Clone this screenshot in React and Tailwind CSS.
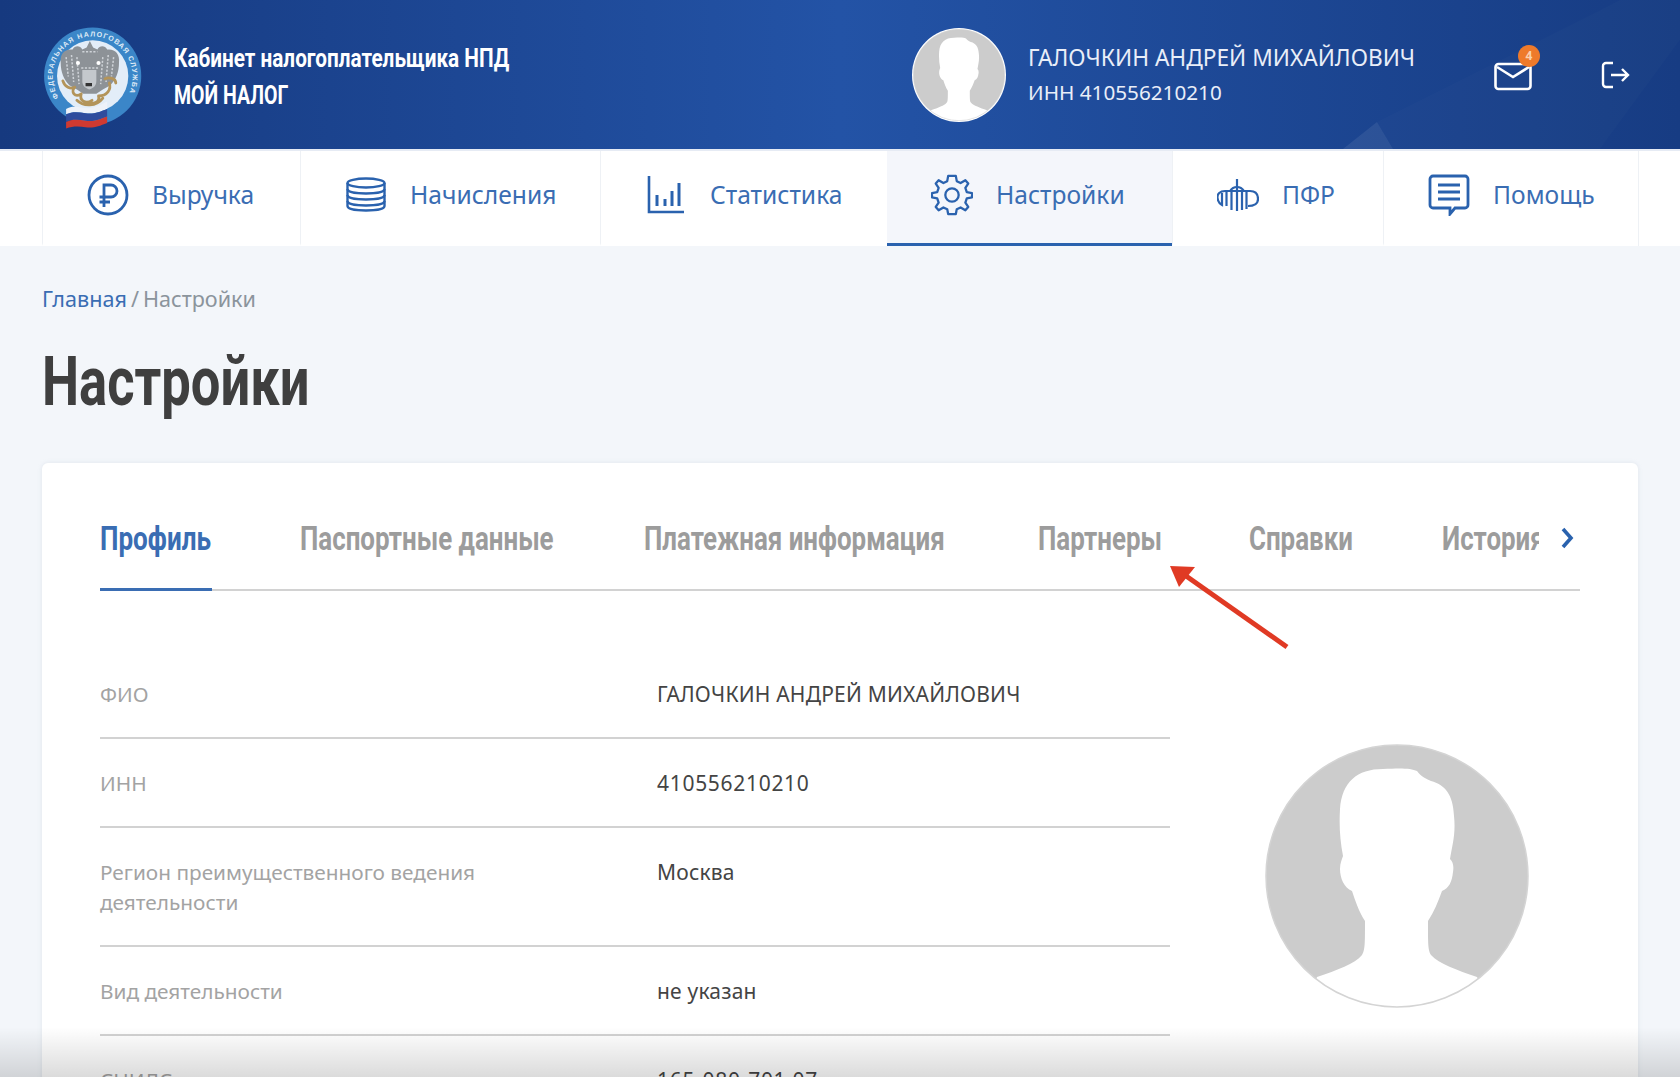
import React from "react";

const narrow = "font-['Roboto',sans-serif] font-bold";
const body = "font-['Noto_Sans',sans-serif]";

// the reference uses a condensed DIN-like face, Roboto squeezed gets near it
function Squeezed({ children, className = "" }) {
  return <span className={`inline-block origin-left whitespace-nowrap ${className}`}>{children}</span>;
}

function Silhouette({ className }) {
  return (
    <svg viewBox="0 0 264 264" className={className}>
      <defs>
        <clipPath id="avatarClip">
          <circle cx="132" cy="132" r="131" />
        </clipPath>
      </defs>
      <circle cx="132" cy="132" r="131" fill="#ccc" />
      <path
        clipPath="url(#avatarClip)"
        d="M52 233 C72 226 90 220 97 211 C100 206 100 200 100 177 C94 168 90 156 87 147 C79 144 75 134 75 125 C75 119 77 115 78 112 C75 96 74 82 75 65 C77 38 92 25 118 25 C135 24 146 24 152 27 C156 33 162 35 166 37 C180 41 188 50 189 72 C191 90 187 102 185 115 C188 118 189 122 188 128 C187 138 184 144 177 147 C173 158 169 168 163 177 C163 200 163 206 166 211 C174 220 192 226 212 233 L240 290 L30 290 Z"
        fill="#fff"
      />
      <circle cx="132" cy="132" r="131" fill="none" stroke="#d4d4d4" strokeWidth="1.5" />
    </svg>
  );
}

function Emblem() {
  return (
    <svg viewBox="0 0 104 112" className="w-[104px] h-[112px] shrink-0 mt-[15px]">
      <defs>
        <path id="emblemRing" d="M23.2 67.5 A37 37 0 1 1 86 67.5" />
      </defs>
      <g transform="translate(-8.3 -1.3) scale(1.08)">
        <circle cx="54.6" cy="47.5" r="45" fill="#3b86c8" />
        <circle cx="54.6" cy="47.5" r="33" fill="#e3edf8" />
        <text fill="#dfeaf6" className="font-['Liberation_Sans',sans-serif] font-bold" fontSize="6.6" letterSpacing="0.95">
          <textPath href="#emblemRing">ФЕДЕРАЛЬНАЯ НАЛОГОВАЯ СЛУЖБА</textPath>
        </text>
        {/* double headed eagle */}
        <path d="M52 15 L55 21 L59 23 C61 19 66 19 68 23 C75 22 80 27 79 35 C79 44 76 51 71 56 L64 60 L58 64 L46 64 L40 60 L33 56 C28 51 25 44 25 35 C24 27 29 22 36 23 C38 19 43 19 45 23 L49 21 Z" fill="#8d9297" />
        <path d="M30 30 L32 48 M35 28 L37 53 M40 30 L42 55 M74 30 L72 48 M69 28 L67 53 M64 30 L62 55 M45 25 L59 25 M44 40 L60 40" stroke="#cfd3d8" strokeWidth="1.4" strokeDasharray="2 1.4" />
        <circle cx="41" cy="35.5" r="1.9" fill="#fff" />
        <circle cx="60" cy="35.5" r="1.9" fill="#fff" />
        <path d="M45 42 H58 V52 C58 57 55 59 51.5 60 C48 59 45 57 45 52 Z" fill="#c4c8cc" />
        <path d="M48 54 H54 V57 H48 Z" fill="#333" />
        {/* gold branches */}
        <path d="M27 52 C29 58 34 60 38 58 M38 58 C34 62 38 68 44 64 M44 64 C42 70 48 74 54 70 M70 54 C72 60 68 66 60 66 M60 66 C62 72 54 74 50 72 M66 50 C70 48 76 50 76 54 M40 70 C46 76 58 76 64 68" stroke="#b3945a" strokeWidth="2.6" fill="none" strokeLinecap="round" />
        {/* flag */}
        <g transform="translate(0 -5)">
          <path d="M30 83 C38 78 46 84 54 82 C60 80 65 78 68 76 L68 83 C60 86 56 88 48 87 C42 86 36 85 30 88 Z" fill="#eef2f9" />
          <path d="M30 88 C36 85 42 86 48 87 C56 88 60 86 68 83 L68 90 C60 93 56 95 48 94 C42 93 36 92 30 95 Z" fill="#2f4c9d" />
          <path d="M30 95 C36 92 42 93 48 94 C56 95 60 93 68 90 L68 96 C60 99 56 101 48 100 C42 99 36 99 30 101 Z" fill="#cf3a31" />
        </g>
      </g>
    </svg>
  );
}

function RubleIcon() {
  return (
    <svg viewBox="0 0 42 42" className="w-[42px] h-[42px]" fill="none" stroke="#2a62ae" strokeWidth="2.8">
      <circle cx="21" cy="21" r="19" />
      <path d="M17 33 V11 H24 A6 6 0 0 1 24 23 H12.5 M12.5 28 H23" />
    </svg>
  );
}

function CoinsIcon() {
  return (
    <svg viewBox="0 0 42 36" className="w-[42px] h-[36px]" fill="none" stroke="#2a62ae" strokeWidth="2.4">
      <ellipse cx="21" cy="6" rx="18.5" ry="4.5" />
      <path d="M2.5 6 V12 C2.5 15 11 16.5 21 16.5 C31 16.5 39.5 15 39.5 12 V6" />
      <path d="M2.5 12 V18 C2.5 21 11 22.5 21 22.5 C31 22.5 39.5 21 39.5 18 V12" />
      <path d="M2.5 18 V24 C2.5 27 11 28.5 21 28.5 C31 28.5 39.5 27 39.5 24 V18" />
      <path d="M2.5 24 V29 C2.5 32 11 33.5 21 33.5 C31 33.5 39.5 32 39.5 29 V24" />
    </svg>
  );
}

function ChartIcon() {
  return (
    <svg viewBox="0 0 38 40" className="w-[38px] h-[40px]" fill="none" stroke="#2a62ae" strokeWidth="2.6">
      <path d="M2 1 V37 H37" />
      <path d="M10 20 V31 M18 24 V31 M25 16 V31 M32 8 V31" strokeWidth="3" />
    </svg>
  );
}

function GearIcon() {
  return (
    <svg viewBox="0 0 44 44" className="w-[44px] h-[44px]" fill="none" stroke="#2a62ae" strokeWidth="2.4" strokeLinejoin="round">
      <path d="M18 2 L26 2 L27 7.5 L31 9.5 L36 6.5 L39 10 L36 14.5 L37.5 19 L43 20 L43 24.5 L37.5 25.5 L36 30 L39 34.5 L36 38 L31 35 L27 37 L26 42 L18 42 L17 37 L13 35 L8 38 L5 34.5 L8 30 L6.5 25.5 L1 24.5 L1 20 L6.5 19 L8 14.5 L5 10 L8 6.5 L13 9.5 L17 7.5 Z" />
      <circle cx="22" cy="22" r="7" />
    </svg>
  );
}

function PfrIcon() {
  return (
    <svg viewBox="0 0 42 32" className="w-[42px] h-[32px]" fill="none" stroke="#2a62ae" strokeWidth="2.2">
      <path d="M20 0 V32" />
      <path d="M8 12 H33 C39 12 41 16 41 20 C41 25 37 27 31 27" />
      <path d="M8 12 C3 12 0 15 0.5 19 C1 23 3 25 5 26 V14" />
      <path d="M13 12 C15 9 18 8 20 8 C22 8 25 9 27 12" />
      <path d="M9.5 12 V27 M14.5 12 V31 M25 12 V31 M29.5 12 V30" />
    </svg>
  );
}

function HelpIcon() {
  return (
    <svg viewBox="0 0 42 42" className="w-[42px] h-[42px]" fill="none" stroke="#2a62ae" strokeWidth="2.8">
      <path d="M5 2 H37 A3 3 0 0 1 40 5 V31 A3 3 0 0 1 37 34 H27 L22 40 V34 H5 A3 3 0 0 1 2 31 V5 A3 3 0 0 1 5 2 Z" />
      <path d="M10 11 H32 M10 18 H32 M10 25 H32" />
    </svg>
  );
}

const navItems = [
  { label: "Выручка", icon: <RubleIcon />, width: "w-[258px]" },
  { label: "Начисления", icon: <CoinsIcon />, width: "w-[300px]" },
  { label: "Статистика", icon: <ChartIcon />, width: "w-[287px]" },
  { label: "Настройки", icon: <GearIcon />, width: "w-[285px]", active: true },
  { label: "ПФР", icon: <PfrIcon />, width: "w-[211px]" },
  { label: "Помощь", icon: <HelpIcon />, width: "w-[255px]" },
];

const tabs = [
  { label: "Паспортные данные", width: "w-[256px]" },
  { label: "Платежная информация", width: "w-[306px]" },
  { label: "Партнеры", width: "w-[123px]" },
  { label: "Справки", width: "w-[105px]" },
];

const rows = [
  { label: "ФИО", value: "ГАЛОЧКИН АНДРЕЙ МИХАЙЛОВИЧ" },
  { label: "ИНН", value: "410556210210", digits: true },
  { label: "Регион преимущественного ведения деятельности", value: "Москва" },
  { label: "Вид деятельности", value: "не указан" },
  { label: "СНИЛС", value: "165-080-701 07", digits: true },
];

export default function App() {
  return (
    <div className={`relative h-[1077px] overflow-hidden bg-[#f3f6fa] ${body}`}>
      {/* Header */}
      <header className="relative h-[149px] flex items-center pl-[42px] overflow-hidden bg-gradient-to-r from-[#16397f] via-[#2353a6] to-[#173c83]">
        <svg viewBox="0 0 500 149" className="absolute right-0 top-0 w-[500px] h-[149px]">
          <path d="M163 149 L197 122 L213 149 Z" fill="#fff" fillOpacity="0.08" />
          <path d="M197 122 L213 149 L420 149 L500 40 L500 0 L440 0 Z" fill="#fff" fillOpacity="0.015" />
        </svg>
        <Emblem />
        <div className={`relative w-[738px] ml-[28px] mt-[4px] text-white text-[25px] leading-[37px] ${narrow}`}>
          <div><Squeezed className="scale-x-[0.83]">Кабинет налогоплательщика НПД</Squeezed></div>
          <div><Squeezed className="scale-x-[0.78]">МОЙ НАЛОГ</Squeezed></div>
        </div>
        <div className="relative w-[94px] h-[94px] rounded-full bg-white p-[1px] shrink-0">
          <Silhouette className="w-full h-full" />
        </div>
        <div className="relative ml-[22px] w-[466px] text-[#e9eef8] leading-[35px]">
          <div className="whitespace-nowrap text-[22.7px]">ГАЛОЧКИН АНДРЕЙ МИХАЙЛОВИЧ</div>
          <div className="text-[20.7px]">ИНН 410556210210</div>
        </div>
        <div className="relative w-[38px] h-[30px] shrink-0 mt-[2px]">
          <svg viewBox="0 0 38 30" className="w-[38px] h-[30px]" fill="none" stroke="#fff" strokeWidth="2.6">
            <rect x="1.5" y="3" width="35" height="25" rx="3" />
            <path d="M3 6 L19 16 L35 6" />
          </svg>
          <div className="absolute -top-[16px] right-[-8px] w-[22px] h-[22px] rounded-full bg-[#ee7a2b] text-[#fbd0ae] text-[12px] font-bold flex items-center justify-center">
            4
          </div>
        </div>
        <svg viewBox="0 0 30 28" className="relative w-[30px] h-[28px] ml-[69px]" fill="none" stroke="#fff" strokeWidth="2.4">
          <path d="M12 2 H5 A3 3 0 0 0 2 5 V23 A3 3 0 0 0 5 26 H12" />
          <path d="M10 14 H27 M21 8 L27 14 L21 20" />
        </svg>
      </header>

      {/* Nav */}
      <nav className="h-[97px] bg-white flex pl-[42px] border-t-[2px] border-t-[#e6ebf4]">
        {navItems.map((item) => (
          <div
            key={item.label}
            className={`${item.width} h-[95px] shrink-0 flex items-center gap-[23px] pl-[44px] pb-[4px] border-b-[3px] ${
              item.active
                ? "bg-[#f4f6fb] border-b-[#2a62ae]"
                : "border-b-transparent border-l-[1.5px] border-l-[#eef1f5]"
            }`}
          >
            <span className="w-[42px] flex justify-center shrink-0">{item.icon}</span>
            <span className="text-[#3a6db3] text-[24.6px] whitespace-nowrap">{item.label}</span>
          </div>
        ))}
        <div className="border-l-[1.5px] border-l-[#eef1f5] flex-1" />
      </nav>

      {/* Content */}
      <main className="px-[42px]">
        <div className="pt-[36px] text-[21.6px] leading-[34px] text-[#8b949c]">
          <span className="text-[#3a6db3]">Главная</span>
          <span className="mx-[4px]">/</span>
          Настройки
        </div>
        <h1 className={`mt-[26px] text-[#3f3f3f] text-[68px] leading-[80px] ${narrow}`}>
          <Squeezed className="scale-x-[0.772]">Настройки</Squeezed>
        </h1>

        <section className="relative mt-[41px] bg-white rounded-[6px] px-[58px] pt-[52px] h-[700px] shadow-[0_0_4px_rgba(180,190,205,0.3)]">
          {/* Tabs */}
          <div className={`flex items-start h-[76px] border-b-2 border-b-[#d2d2d2] text-[33px] leading-[48px] ${narrow}`}>
            <div className="h-[76px] w-[112px] text-[#3a6db3] border-b-[3px] border-b-[#3a6db3] shrink-0">
              <Squeezed className="scale-x-[0.79]">Профиль</Squeezed>
            </div>
            <div className="flex gap-[88px] ml-[88px] text-[#9c9c9c]">
              {tabs.map((t) => (
                <div key={t.label} className={t.width}>
                  <Squeezed className="scale-x-[0.785]">{t.label}</Squeezed>
                </div>
              ))}
              <div className="w-[97px] overflow-hidden mr-[3px]">
                <Squeezed className="scale-x-[0.785]">История</Squeezed>
              </div>
            </div>
            <svg viewBox="0 0 14 22" className="w-[14px] h-[22px] mt-[12px] ml-[18px] shrink-0" fill="none" stroke="#2a62ae" strokeWidth="3.6">
              <path d="M3 2 L11 11 L3 20" />
            </svg>
          </div>

          {/* Profile rows */}
          <div className="flex mt-[59px]">
            <div className="w-[1070px] shrink-0">
              {rows.map((row) => (
                <div key={row.label} className="flex pt-[29px] pb-[28px] border-b-2 border-b-[#d2d2d2] text-[21px] leading-[30px]">
                  <div className="w-[557px] pr-[150px] text-[#a3a3a3] text-[20.8px] shrink-0">{row.label}</div>
                  <div className={`text-[#444] ${row.digits ? "tracking-[0.7px]" : "tracking-[0.2px]"}`}>{row.value}</div>
                </div>
              ))}
            </div>
            <div className="ml-[95px] mt-[94px]">
              <Silhouette className="w-[264px] h-[264px]" />
            </div>
          </div>

          {/* Red annotation arrow */}
          <svg viewBox="0 0 130 90" className="absolute left-[1125px] top-[100px] w-[130px] h-[90px]" fill="none">
            <path d="M120 84 L12 8" stroke="#e03a24" strokeWidth="5" />
            <path d="M3 3 L28 4 L12 24 Z" fill="#e03a24" />
          </svg>
        </section>
      </main>

      {/* Fade at the bottom of the picture */}
      <div className="absolute left-0 right-0 bottom-0 h-[50px] bg-gradient-to-b from-transparent to-[rgba(0,0,0,0.14)]" />
    </div>
  );
}
